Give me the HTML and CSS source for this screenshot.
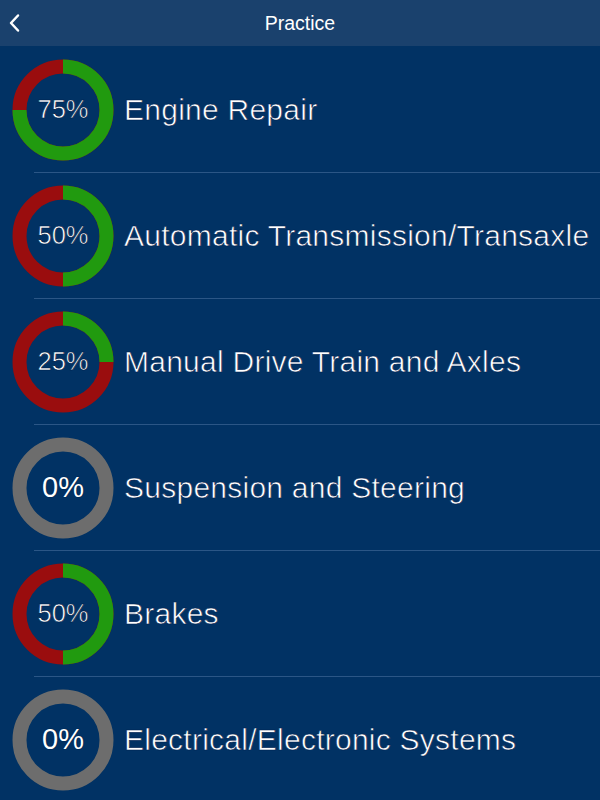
FILE: index.html
```html
<!DOCTYPE html>
<html>
<head>
<meta charset="utf-8">
<link rel="stylesheet" href="styles.css">
</head>
<body>
<header class="nav">
  <svg class="back" width="12" height="20" viewBox="0 0 12 20"><path d="M10 2.5 L3 10 L10 17.5" fill="none" stroke="#fff" stroke-width="2.5" stroke-linecap="round" stroke-linejoin="round"/></svg>
  <div class="title">Practice</div>
</header>
<main class="list">
  <div class="row">
    <div class="ring">
      <svg viewBox="0 0 102 102" width="102" height="102">
        <circle cx="51" cy="51" r="43.5" class="red" pathLength="100"/>
        <circle cx="51" cy="51" r="43.5" class="green" pathLength="100" stroke-dasharray="75 100" transform="rotate(-90 51 51)"/>
      </svg>
      <span class="pct">75%</span>
    </div>
    <div class="label">Engine Repair</div>
  </div>
  <div class="sep"></div>
  <div class="row">
    <div class="ring">
      <svg viewBox="0 0 102 102" width="102" height="102">
        <circle cx="51" cy="51" r="43.5" class="red" pathLength="100"/>
        <circle cx="51" cy="51" r="43.5" class="green" pathLength="100" stroke-dasharray="50 100" transform="rotate(-90 51 51)"/>
      </svg>
      <span class="pct">50%</span>
    </div>
    <div class="label">Automatic Transmission/Transaxle</div>
  </div>
  <div class="sep"></div>
  <div class="row">
    <div class="ring">
      <svg viewBox="0 0 102 102" width="102" height="102">
        <circle cx="51" cy="51" r="43.5" class="red" pathLength="100"/>
        <circle cx="51" cy="51" r="43.5" class="green" pathLength="100" stroke-dasharray="25 100" transform="rotate(-90 51 51)"/>
      </svg>
      <span class="pct">25%</span>
    </div>
    <div class="label">Manual Drive Train and Axles</div>
  </div>
  <div class="sep"></div>
  <div class="row">
    <div class="ring">
      <svg viewBox="0 0 102 102" width="102" height="102">
        <circle cx="51" cy="51" r="43.5" class="gray"/>
      </svg>
      <span class="pct zero">0%</span>
    </div>
    <div class="label">Suspension and Steering</div>
  </div>
  <div class="sep"></div>
  <div class="row">
    <div class="ring">
      <svg viewBox="0 0 102 102" width="102" height="102">
        <circle cx="51" cy="51" r="43.5" class="red" pathLength="100"/>
        <circle cx="51" cy="51" r="43.5" class="green" pathLength="100" stroke-dasharray="50 100" transform="rotate(-90 51 51)"/>
      </svg>
      <span class="pct">50%</span>
    </div>
    <div class="label">Brakes</div>
  </div>
  <div class="sep"></div>
  <div class="row">
    <div class="ring">
      <svg viewBox="0 0 102 102" width="102" height="102">
        <circle cx="51" cy="51" r="43.5" class="gray"/>
      </svg>
      <span class="pct zero">0%</span>
    </div>
    <div class="label">Electrical/Electronic Systems</div>
  </div>
</main>
</body>
</html>
```
FILE: styles.css
```css
html, body {
  margin: 0;
  padding: 0;
}
body {
  width: 600px;
  height: 800px;
  overflow: hidden;
  background: #013264;
  font-family: "Liberation Sans", Arial, sans-serif;
  color: #fff;
}
.nav {
  height: 46px;
  background: #1a416d;
  display: flex;
  align-items: center;
  justify-content: center;
  position: relative;
}
.back {
  position: absolute;
  left: 8px;
  top: 13px;
}
.title {
  font-size: 19.5px;
  color: #fff;
}
.list {
  display: flex;
  flex-direction: column;
  padding-top: 1px;
}
.row {
  height: 125px;
  display: flex;
  align-items: center;
  padding-left: 12px;
  gap: 10px;
}
.sep {
  height: 1px;
  margin-left: 34px;
  background: #2b5686;
}
.ring {
  width: 102px;
  height: 102px;
  display: flex;
  align-items: center;
  justify-content: center;
  position: relative;
  flex: none;
}
.ring svg {
  position: absolute;
  left: 0;
  top: 0;
}
.ring circle {
  fill: none;
  stroke-width: 14;
}
.red { stroke: #9a0d0e; }
.green { stroke: #219a0f; }
.gray { stroke: #6d6d6d; }
.pct {
  position: relative;
  font-size: 25.5px;
  -webkit-text-stroke: 0.6px #001a45;
}
.pct.zero {
  font-size: 29px;
  -webkit-text-stroke: 0;
  text-shadow: 0 0 1px #00103a;
}
.label {
  font-size: 30px;
  letter-spacing: 0.25px;
  white-space: nowrap;
  -webkit-text-stroke: 0.6px #00214f;
}
```
